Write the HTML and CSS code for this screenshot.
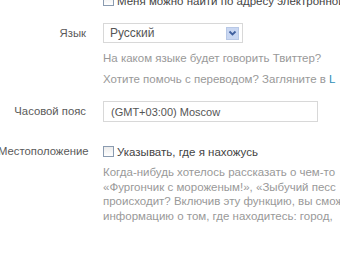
FILE: index.html
```html
<!DOCTYPE html>
<html lang="ru">
<head>
<meta charset="utf-8">
<link rel="stylesheet" href="styles.css">
</head>
<body>
<div class="form">
  <div class="row row-top">
    <div class="label"></div>
    <div class="field">
      <label class="check"><span class="box"></span><span class="check-text">Меня можно найти по адресу электронной почты</span></label>
    </div>
  </div>
  <div class="row row-lang">
    <div class="label">Язык</div>
    <div class="field">
      <div class="select">
        <span class="select-text">Русский</span>
        <span class="arrow"><svg width="9" height="7" viewBox="0 0 9 7"><path d="M1.5 1.5 L4.5 4.5 L7.5 1.5" fill="none" stroke="#3f5f9e" stroke-width="1.8"/></svg></span>
      </div>
      <p class="help help-first">На каком языке будет говорить Твиттер?</p>
      <p class="help">Хотите помочь с переводом? Загляните в <a class="link">L</a></p>
    </div>
  </div>
  <div class="row row-tz">
    <div class="label">Часовой пояс</div>
    <div class="field">
      <div class="input">(GMT+03:00) Moscow</div>
    </div>
  </div>
  <div class="row row-loc">
    <div class="label">Местоположение</div>
    <div class="field">
      <label class="check"><span class="box"></span><span class="check-text">Указывать, где я нахожусь</span></label>
      <p class="desc">Когда-нибудь хотелось рассказать о чем-то<br>«Фургончик с мороженым!», «Зыбучий песс<br>происходит? Включив эту функцию, вы смож<br>информацию о том, где находитесь: город,</p>
    </div>
  </div>
</div>
</body>
</html>
```
FILE: styles.css
```css
html, body {
  margin: 0;
  padding: 0;
  background: #fff;
  overflow: hidden;
}
body {
  width: 340px;
  height: 255px;
  font-family: "Liberation Sans", Arial, sans-serif;
  color: #555;
}
.form {
  display: flex;
  flex-direction: column;
  margin-top: -6px;
  width: 340px;
}
.row {
  display: grid;
  grid-template-columns: 86px 1fr;
  column-gap: 17px;
  align-items: start;
}
.label {
  text-align: right;
  font-size: 11.3px;
  color: #5a5a5a;
  white-space: nowrap;
}
.field {
  display: flex;
  flex-direction: column;
  white-space: nowrap;
  overflow: hidden;
}
.check {
  display: flex;
  align-items: center;
  gap: 3px;
  font-size: 11.5px;
  color: #444;
  height: 13px;
}
.box {
  width: 11px;
  height: 11px;
  border: 1px solid #8a9bb0;
  background: linear-gradient(#ececec, #fff);
  box-sizing: border-box;
  flex: none;
}
.row-lang {
  margin-top: 16px;
}
.row-lang .label {
  padding-top: 4px;
}
.select {
  width: 140px;
  height: 20px;
  border: 1px solid #d8d8d8;
  display: flex;
  align-items: center;
  justify-content: space-between;
  padding: 0 3px 0 6px;
  box-sizing: border-box;
  font-size: 12px;
  color: #555;
}
.arrow {
  width: 13px;
  height: 13px;
  background: #c9d7f2;
  border: 1px solid #b8c8e6;
  display: flex;
  align-items: center;
  justify-content: center;
  box-sizing: border-box;
}
.help {
  margin: 0;
  font-size: 11.5px;
  line-height: 14px;
  color: #999;
  margin-top: 7px;
}
.help-first {
  margin-top: 8px;
}
.link {
  color: #2f8fb8;
}
.row-tz {
  margin-top: 15px;
}
.row-tz .label {
  padding-top: 4px;
}
.input {
  width: 215px;
  height: 21px;
  border: 1px solid #d8d8d8;
  padding-left: 7px;
  box-sizing: border-box;
  display: flex;
  align-items: center;
  font-size: 11px;
  color: #555;
}
.row-loc {
  margin-top: 23px;
}
.row-loc .label {
  margin-left: -2px;
}
.desc {
  margin: 7px 0 0;
  font-size: 11.5px;
  line-height: 14.6px;
  color: #999;
}
```
